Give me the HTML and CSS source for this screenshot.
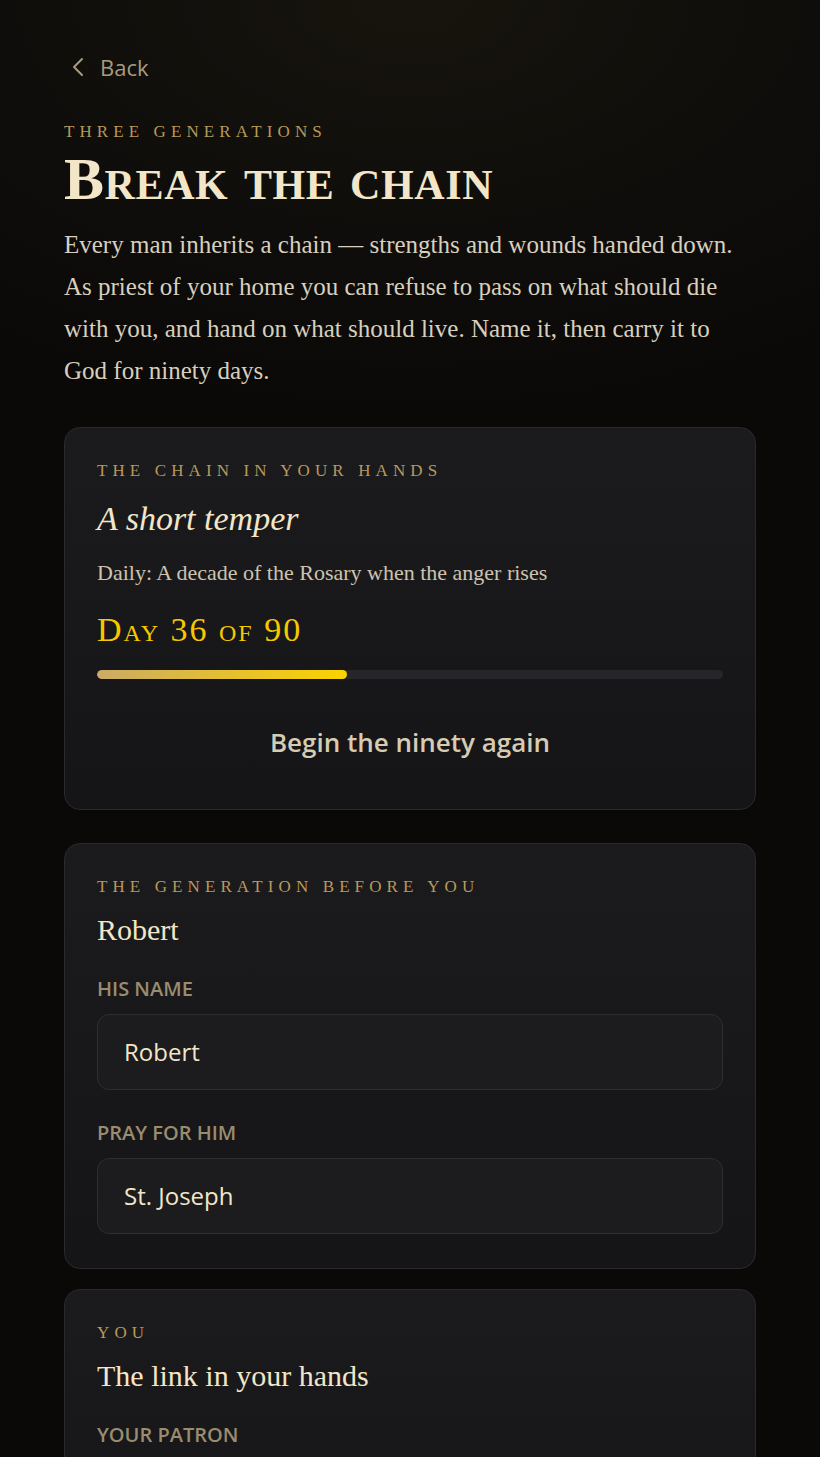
FILE: index.html
```html
<!DOCTYPE html>
<html lang="en">
<head>
    <meta charset="UTF-8">
    <meta name="viewport" content="width=device-width, initial-scale=1.0">
    <title>Break the Chain | Three Generations</title>
    <link rel="stylesheet" href="styles.css">
</head>
<body>
    <main class="page">
        <a href="#" class="back">
            <svg xmlns="http://www.w3.org/2000/svg" viewBox="0 0 24 24">
                <path d="M15 4l-8 8 8 8"/>
            </svg>
            <span>Back</span>
        </a>

        <p class="eyebrow">Three generations</p>
        <h1 class="title">Break the chain</h1>
        <p class="intro">Every man inherits a chain — strengths and wounds handed down. As priest of your home you can refuse to pass on what should die with you, and hand on what should live. Name it, then carry it to God for ninety days.</p>

        <section class="card card-chain">
            <p class="card-label">The chain in your hands</p>
            <h2 class="card-title card-title-italic">A short temper</h2>
            <p class="card-note">Daily: A decade of the Rosary when the anger rises</p>
            <p class="day-count">Day 36 of 90</p>
            <div class="progress">
                <div class="progress-fill" style="width: 40%"></div>
            </div>
            <button class="reset" type="button">Begin the ninety again</button>
        </section>

        <section class="card">
            <p class="card-label">The generation before you</p>
            <h2 class="card-title">Robert</h2>
            <label class="field">
                <span class="field-label">His name</span>
                <input class="field-input" type="text" value="Robert">
            </label>
            <label class="field">
                <span class="field-label">Pray for him</span>
                <input class="field-input" type="text" value="St. Joseph">
            </label>
        </section>

        <section class="card">
            <p class="card-label">You</p>
            <h2 class="card-title">The link in your hands</h2>
            <label class="field">
                <span class="field-label">Your patron</span>
                <input class="field-input" type="text" value="St. Michael">
            </label>
        </section>
    </main>
</body>
</html>
```

FILE: styles.css
```css
:root {
    --bg: #0a0908;
    --card: #151517;
    --card-top: #1b1b1d;
    --border: #2a2a2c;
    --cream: #f3e6c8;
    --text: #d8cfbd;
    --muted: #9a8c6e;
    --gold: #b8995a;
    --yellow: #f5c800;
    --serif: 'Liberation Serif', 'Times New Roman', serif;
    --sans: 'Open Sans', 'Noto Sans', sans-serif;
}

* {
    box-sizing: border-box;
}

body {
    margin: 0;
    min-height: 100vh;
    background-color: var(--bg);
    background-image: radial-gradient(ellipse 90% 420px at 50% 0, #17140d 0%, #0e0d0b 60%, var(--bg) 100%);
    background-repeat: no-repeat;
    color: var(--text);
    font-family: var(--serif);
}

.page {
    max-width: 820px;
    margin: 0 auto;
    padding: 48px 64px 40px;
}

.back {
    display: inline-flex;
    align-items: center;
    gap: 9px;
    height: 38px;
    padding-left: 3px;
    color: #a89b7e;
    font-family: var(--sans);
    font-size: 22px;
    text-decoration: none;
}

.back svg {
    width: 24px;
    height: 24px;
    fill: none;
    stroke: currentColor;
    stroke-width: 2;
    stroke-linecap: round;
    stroke-linejoin: round;
}

.eyebrow,
.card-label {
    margin: 0;
    color: var(--gold);
    font-family: var(--serif);
    font-size: 17px;
    letter-spacing: 0.3em;
    text-transform: uppercase;
}

.eyebrow {
    margin-top: 36px;
}

.title {
    margin: 4px 0 0;
    color: var(--cream);
    font-family: var(--serif);
    font-size: 60px;
    font-weight: 700;
    font-variant: small-caps;
    letter-spacing: 0.6px;
    line-height: 1.1;
}

.intro {
    margin: 12px 0 0;
    font-size: 25px;
    line-height: 42px;
    color: var(--text);
}

.card {
    margin-top: 35px;
    padding: 33px 32px 34px;
    background: linear-gradient(180deg, var(--card-top), var(--card));
    border: 1px solid var(--border);
    border-radius: 16px;
}

.card + .card {
    margin-top: 20px;
}

.card-chain + .card {
    margin-top: 33px;
}

.card-title {
    margin: 15px 0 0;
    color: var(--cream);
    font-family: var(--serif);
    font-size: 30px;
    font-weight: 400;
    line-height: 1.2;
}

.card-title-italic {
    margin-top: 18px;
    font-style: italic;
    font-size: 34px;
}

.card-note {
    margin: 20px 0 0;
    color: #cdc3b0;
    font-size: 22px;
}

.day-count {
    margin: 24px 0 0;
    color: var(--yellow);
    font-size: 34px;
    font-variant: small-caps;
    letter-spacing: 2px;
    line-height: 1.2;
}

.progress {
    height: 9px;
    margin-top: 19px;
    background: #26262a;
    border-radius: 999px;
    overflow: hidden;
}

.progress-fill {
    height: 100%;
    background: linear-gradient(90deg, #cbab66, #fbd300);
    border-radius: 999px;
}

.reset {
    display: block;
    width: 100%;
    margin-top: 25px;
    padding: 20px 0 15px;
    background: none;
    border: none;
    color: #d6cbb3;
    font-family: var(--sans);
    font-size: 26px;
    font-weight: 600;
    cursor: pointer;
}

.field {
    display: block;
    margin-top: 27px;
}

.field + .field {
    margin-top: 29px;
}

.field-label {
    display: block;
    margin-bottom: 12px;
    color: var(--muted);
    font-family: var(--sans);
    font-size: 20px;
    font-weight: 600;
    text-transform: uppercase;
}

.field-input {
    display: block;
    width: 100%;
    height: 76px;
    padding: 0 26px;
    background: #1c1c1f;
    border: 1px solid #2e2e31;
    border-radius: 12px;
    color: var(--cream);
    font-family: var(--sans);
    font-size: 24px;
    outline: none;
}
```
